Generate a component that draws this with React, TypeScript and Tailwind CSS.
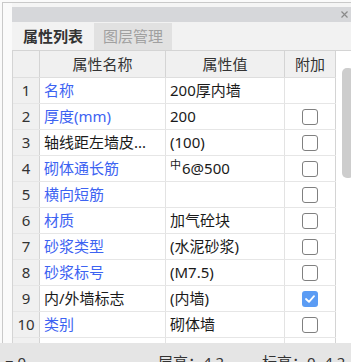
import React from 'react';

type Row = {
    name: string;
    value: string;
    blue: boolean;
    check: 'none' | 'off' | 'on';
};

const rows: Row[] = [
    { name: '名称', value: '200厚内墙', blue: true, check: 'none' },
    { name: '厚度(mm)', value: '200', blue: true, check: 'off' },
    { name: '轴线距左墙皮...', value: '(100)', blue: false, check: 'off' },
    { name: '砌体通长筋', value: '中6@500', blue: true, check: 'off' },
    { name: '横向短筋', value: '', blue: true, check: 'off' },
    { name: '材质', value: '加气砼块', blue: true, check: 'off' },
    { name: '砂浆类型', value: '(水泥砂浆)', blue: true, check: 'off' },
    { name: '砂浆标号', value: '(M7.5)', blue: true, check: 'off' },
    { name: '内/外墙标志', value: '(内墙)', blue: false, check: 'on' },
    { name: '类别', value: '砌体墙', blue: true, check: 'off' },
    { name: '', value: '', blue: false, check: 'none' },
];

const font = { fontFamily: '"Noto Sans", "Noto Sans CJK SC", sans-serif' };

const CheckBox: React.FC<{ on: boolean }> = ({ on }) =>
    on ? (
        <div className="w-[16px] h-[16px] rounded-[3px] bg-[#5b9cf4] flex items-center justify-center">
            <svg width="10" height="8" viewBox="0 0 10 8">
                <path d="M1 4 L4 6.8 L9 1.2" fill="none" stroke="white" strokeWidth="1.8" strokeLinecap="round" strokeLinejoin="round" />
            </svg>
        </div>
    ) : (
        <div className="w-[16px] h-[16px] rounded-[3px] border border-[#808080] bg-white" />
    );

const App: React.FC = () => {
    return (
        <div className="w-[351px] h-[362px] overflow-hidden bg-[#f7f7f7] flex flex-col text-[#222]" style={font}>
            {/* top edge */}
            <div className="h-[2px] shrink-0 bg-[#fafafa]" />
            <div className="flex flex-1 min-h-0">
                <div className="w-[12px] shrink-0 flex">
                    <div className="w-[2px] bg-[#fafafa]" />
                    <div className="w-[1px] bg-[#c9c9c9]" />
                    <div className="flex-1 bg-[#fafafa]" />
                </div>
                <div className="flex-1 flex flex-col min-w-0">
                    <div className="h-[1px] bg-[#c9c9c9] -ml-[9px]" />
                    <div className="h-[4px] bg-[#f5f5f5]" />
                    {/* title bar */}
                    <div className="h-[15px] shrink-0 bg-[#d6d7da] flex items-center justify-end pr-[3px]">
                        <svg width="7" height="7" viewBox="0 0 7 7">
                            <path d="M0.5 0.5 L6.5 6.5 M6.5 0.5 L0.5 6.5" stroke="#8a8a8a" strokeWidth="1.2" />
                        </svg>
                    </div>
                    {/* tabs */}
                    <div className="h-[28px] shrink-0 bg-[#f2f2f2] flex items-end">
                        <div className="h-[27px] w-[82px] flex items-center justify-center text-[15px] font-semibold text-[#333]">
                            属性列表
                        </div>
                        <div className="h-[27px] w-[78px] bg-[#e1e1e1] flex items-center justify-center text-[15px] text-[#a0a0a0]">
                            图层管理
                        </div>
                    </div>
                    {/* table + scroll */}
                    <div className="flex flex-1 min-h-0 border-t border-[#d4d4d4]">
                        <div className="w-[324px] shrink-0 flex flex-col border-l border-[#d4d4d4] text-[15px] overflow-hidden">
                            <div className="grid grid-cols-[27px_126px_119px_51px] h-[27px] shrink-0 bg-[#f0f0f0] border-b border-[#dedede] text-[#333]">
                                <div className="border-r border-[#d4d4d4]" />
                                <div className="border-r border-[#d4d4d4] flex items-center justify-center">属性名称</div>
                                <div className="border-r border-[#d4d4d4] flex items-center justify-center">属性值</div>
                                <div className="border-r border-[#d4d4d4] flex items-center justify-center">附加</div>
                            </div>
                            {rows.map((r, i) => (
                                <div key={i} className="grid grid-cols-[27px_126px_119px_51px] h-[26px] shrink-0 border-b border-[#e6e6e6]">
                                    <div className="bg-[#f0f0f0] border-r border-[#d4d4d4] flex items-center justify-center text-[#333]">
                                        {r.name || r.check !== 'none' || i < 10 ? i + 1 : ''}
                                    </div>
                                    <div className={`bg-white border-r border-[#e3e3e3] flex items-center pl-[4px] whitespace-nowrap ${r.blue ? 'text-[#3d63f2]' : 'text-[#1a1a1a]'}`}>
                                        {r.name}
                                    </div>
                                    <div className="bg-white border-r border-[#e3e3e3] flex items-center pl-[4px] whitespace-nowrap text-[#1a1a1a]">
                                        {r.value.startsWith('中') ? (
                                            <>
                                                <span className="text-[11px] -mt-[6px] mr-[1px]">中</span>
                                                {r.value.slice(1)}
                                            </>
                                        ) : (
                                            r.value
                                        )}
                                    </div>
                                    <div className="bg-white border-r border-[#d4d4d4] flex items-center justify-center">
                                        {r.check !== 'none' && <CheckBox on={r.check === 'on'} />}
                                    </div>
                                </div>
                            ))}
                        </div>
                        <div className="flex-1 bg-white pl-[6px] pt-[17px]">
                            <div className="w-[12px] h-[110px] rounded-[5px] bg-[#cdcdcd]" />
                        </div>
                    </div>
                </div>
            </div>
            {/* status bar */}
            <div className="h-[19px] shrink-0 bg-[#e5e5e5] relative text-[15px] text-[#333] leading-[20px]">
                <div className="flex pt-[9px] whitespace-nowrap">
                    <span className="ml-[5px] w-[153px]">= 0</span>
                    <span className="w-[104px]">层高：4.2</span>
                    <span>标高：0~4.2</span>
                </div>
            </div>
        </div>
    );
};

export default App;
